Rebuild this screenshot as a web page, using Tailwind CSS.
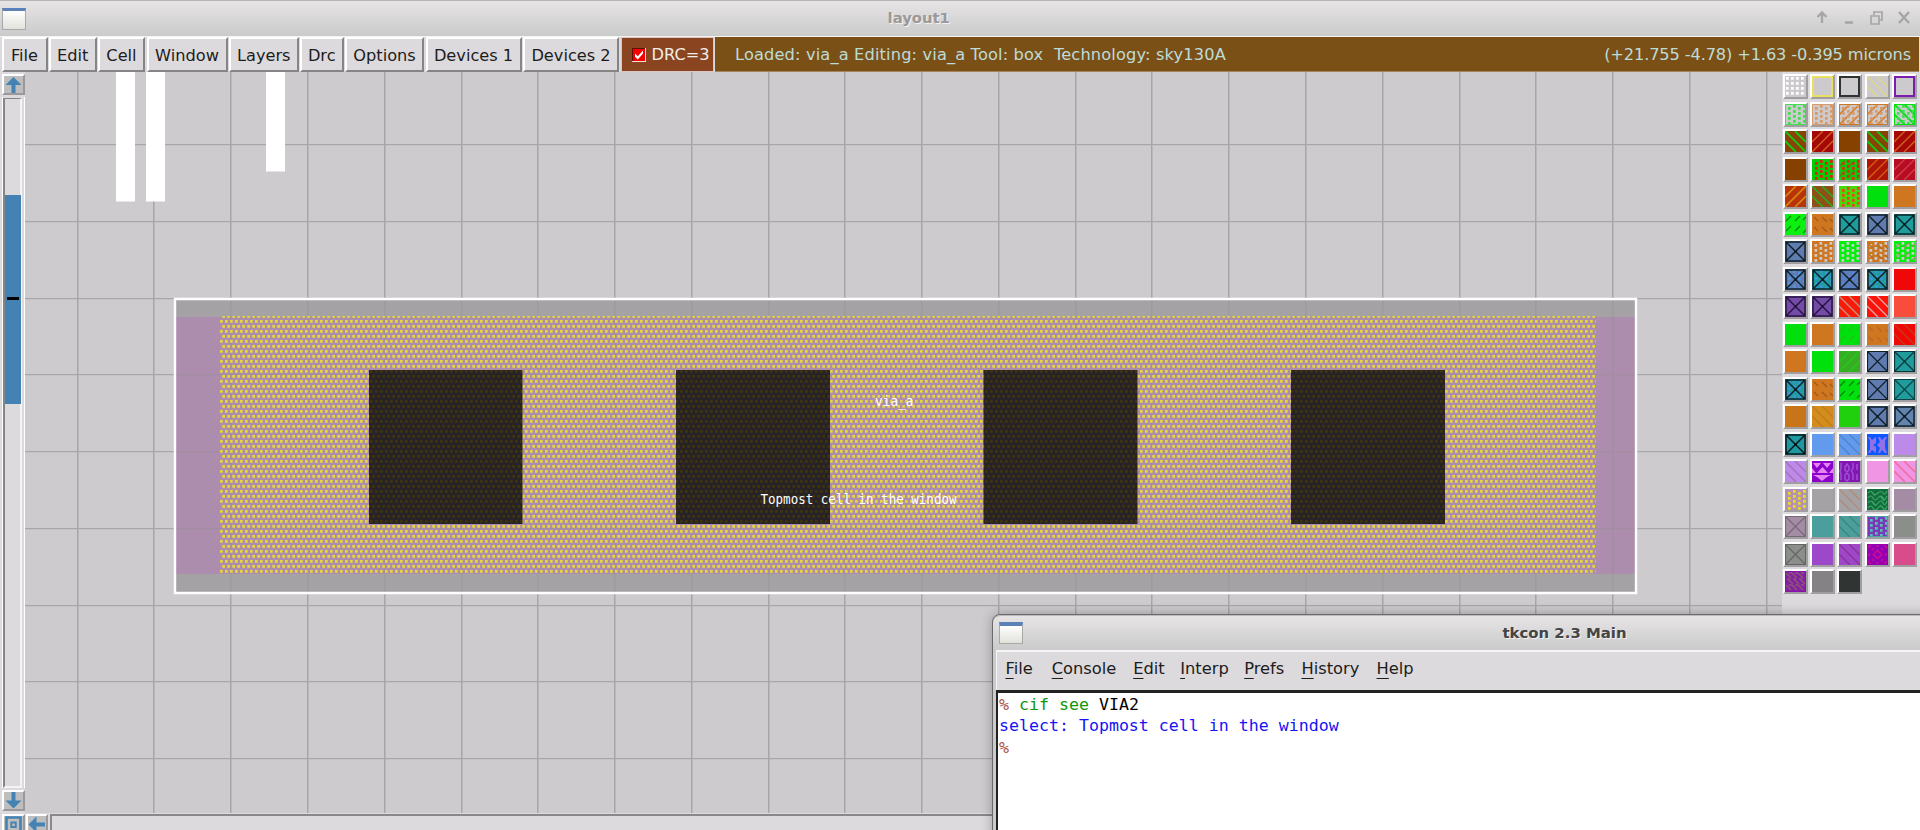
<!DOCTYPE html>
<html lang="en">
<head>
<meta charset="utf-8">
<title>layout1</title>
<script src="https://cdn.jsdelivr.net/npm/@tailwindcss/browser@4"></script>
</head>
<body class="w-[1920px] h-[830px] overflow-hidden relative flex flex-col bg-[#dddadd] font-['DejaVu_Sans',sans-serif] text-[16.2px] text-[#1c1c1c]">

<!-- Title bar -->
<header class="h-9 shrink-0 flex items-center border-t border-[#b5b5b5] bg-linear-to-b from-[#e8e4e6] via-[#d8d7d8] to-[#cbcbcb] px-0.5">
  <div class="w-6 h-[22px] border border-[#a9a9a9] border-t-[3px] border-t-[#5b82b8] bg-linear-to-b from-white to-[#e0e2da]"></div>
  <div class="flex-1 pr-[4px] text-center font-bold text-[14.8px] text-[#999] [text-shadow:1px_1px_0_#f2f2f2]">layout1</div>
  <svg class="w-[96px] h-[18px] mr-[6.5px] mb-[3px]" viewBox="0 0 96 18" fill="none" stroke="#a6a6a6" stroke-width="2">
    <path d="M6 15V5M1.500 9L6 4.500L10.500 9" stroke-width="2.400"/>
    <path d="M29 14.500h8" stroke-width="2.600"/>
    <path d="M55 8h8v8h-8zM58 7V4h8v8h-2" stroke-width="1.700"/>
    <path d="M83 4l10 11M93 4L83 15" stroke-width="2.400"/>
  </svg>
</header>

<!-- Menu and status bar -->
<nav class="h-9 shrink-0 flex items-stretch gap-[1.5px] pl-[1.5px] border-t border-[#f4f4f4] leading-[33px] whitespace-nowrap">
  <div class="w-[46px] border-2 border-t-white border-l-white border-r-[#858585] border-b-[#858585] text-center">File</div>
  <div class="w-[47.5px] border-2 border-t-white border-l-white border-r-[#858585] border-b-[#858585] text-center">Edit</div>
  <div class="w-[47px] border-2 border-t-white border-l-white border-r-[#858585] border-b-[#858585] text-center">Cell</div>
  <div class="w-[81px] border-2 border-t-white border-l-white border-r-[#858585] border-b-[#858585] text-center">Window</div>
  <div class="w-[69.5px] border-2 border-t-white border-l-white border-r-[#858585] border-b-[#858585] text-center">Layers</div>
  <div class="w-[43.5px] border-2 border-t-white border-l-white border-r-[#858585] border-b-[#858585] text-center">Drc</div>
  <div class="w-[79px] border-2 border-t-white border-l-white border-r-[#858585] border-b-[#858585] text-center">Options</div>
  <div class="w-[96px] border-2 border-t-white border-l-white border-r-[#858585] border-b-[#858585] text-center">Devices 1</div>
  <div class="w-[96px] border-2 border-t-white border-l-white border-r-[#858585] border-b-[#858585] text-center">Devices 2</div>
  <div class="w-[93px] border border-[#d9c8c0] bg-[#8a4420] text-[#f0eee8] flex items-center pl-[10px] gap-[6px]">
    <svg class="w-[14px] h-[14px] shrink-0" viewBox="0 0 14 14"><path d="M0 0h14v14H0z" fill="#f5dada"/><path d="M0 0h13v13H0z" fill="#5a1208"/><path d="M1 1h12v12H1z" fill="#f80000"/><path d="M3 5.500v3.200L5.800 11.500L11 5.500V2.500L5.800 8.300z" fill="#fff"/></svg>
    <span>DRC=3</span>
  </div>
  <div class="flex-1 mr-px flex justify-between bg-[#7b5017] text-[#bddcd8] border-b border-[#a3845c] pl-[20px] pr-[8px] leading-[35px]">
    <span class="whitespace-pre tracking-[0.16px]">Loaded: via_a Editing: via_a Tool: box  Technology: sky130A</span>
    <span class="tracking-[-0.12px]">(+21.755 -4.78) +1.63 -0.395 microns</span>
  </div>
</nav>

<main class="flex-1 min-h-0 flex">
  <!-- Vertical scroll bar -->
  <aside class="w-[25px] shrink-0 flex flex-col pl-0.5 pt-0.5">
    <div class="h-[21px] shrink-0 border-2 border-t-white border-l-white border-r-[#9a989a] border-b-[#9a989a] bg-[#bebebe]">
      <svg class="w-full h-full" viewBox="0 0 19 17"><path d="M9.500 1L17.500 9H11.500V17H7.500V9H1.500z" fill="#4482b4"/></svg>
    </div>
    <div class="h-[691px] shrink-0 my-0.5 border-x border-white flex">
      <div class="w-[19px] border-t border-l-2 border-r-2 border-b-2 border-t-[#858585] border-l-[#858585] border-r-[#f4f4f4] border-b-[#f4f4f4] bg-[#dddadd] pt-[96px] mt-px">
        <div class="h-[209px] w-[16px] bg-[#4482b4] pt-[102px]"><div class="h-[3px] w-[12px] ml-[2px] bg-black"></div></div>
      </div>
    </div>
    <div class="h-[21px] shrink-0 border-2 border-t-white border-l-white border-r-[#9a989a] border-b-[#9a989a] bg-[#bebebe]">
      <svg class="w-full h-full" viewBox="0 0 19 17"><path d="M9.500 16.500L17.500 8.500H11.500V0H7.500V8.500H1.500z" fill="#4482b4"/></svg>
    </div>
    <div class="h-[21px] shrink-0 mt-[3px] border-2 border-t-white border-l-white border-r-[#9a989a] border-b-[#9a989a] bg-[#bebebe]">
      <svg class="w-full h-full" viewBox="0 0 19 17" fill="none" stroke="#4482b4"><path d="M2.500 1.500h14v15h-14z" stroke-width="2.600"/><path d="M7.300 6.500h4.500v4.500H7.300z" stroke-width="1.800"/></svg>
    </div>
  </aside>

  <div class="flex-1 min-w-0 flex flex-col">
    <!-- Layout canvas -->
    <svg class="w-[1757px] h-[741px] shrink-0 block" viewBox="25 72 1757 741">
      <defs>
        <pattern id="dots" patternUnits="userSpaceOnUse" x="220" y="314" width="5" height="10">
          <path d="M2.300 1h2.700v2.700H2.300zM0 6h2.700v2.700H0z" fill="#e6d636"/>
        </pattern>
        <pattern id="dark" patternUnits="userSpaceOnUse" x="220" y="314" width="5" height="10">
          <path d="M0 0h5v10H0z" fill="#272227"/><path d="M2.300 1h2.700v2.700H2.300zM0 6h2.700v2.700H0z" fill="#3c340e"/>
        </pattern>
      </defs>
      <rect x="25" y="72" width="1757" height="741" fill="#cdcbce"/>
      <g id="grid" fill="#a8a6a9"></g>
      <path d="M116 72h19v129.500h-19zM146 72h19v129.500h-19zM266 72h19v99.500h-19z" fill="#fff"/>
      <path d="M175 299h1461v294H175z" fill="#a4a2a4"/>
      <path d="M176 317h1459v257H176z" fill="#ad8dad"/>
      <g id="grid2" fill="#8f8f8f" opacity=".3"></g>
      <path d="M220 316h1375.500v257H220z" fill="url(#dots)"/>
      <path d="M369 370h153.500v154H369zM676 370h154v154H676zM983.500 370h154v154h-154zM1291 370h154v154h-154z" fill="url(#dark)"/>
      <path d="M175 299h1461v294H175z" fill="none" stroke="#fff" stroke-width="2.400"/>
      <g fill="#fff" font-family="DejaVu Sans Mono, monospace" font-size="13.300">
        <text x="875" y="405.500" textLength="38.500" lengthAdjust="spacingAndGlyphs">via_a</text>
        <text x="760.500" y="504" textLength="196" lengthAdjust="spacingAndGlyphs">Topmost cell in the window</text>
      </g>
    </svg>
    <!-- Horizontal scroll bar -->
    <div class="flex-1 flex pt-px pl-px">
      <div class="w-[22px] h-[21px] border-2 border-t-white border-l-white border-r-[#9a989a] border-b-[#9a989a] bg-[#bebebe]">
        <svg class="w-full h-full" viewBox="0 0 18 17"><path d="M0.500 8.500L8.500 0.500V6.500H17V10.500H8.500V16.500z" fill="#4482b4"/></svg>
      </div>
      <div class="flex-1 ml-0.5 border-t-2 border-l-2 border-[#8a888a] bg-[#dddadd]"></div>
    </div>
  </div>

  <!-- Layer palette -->
  <section id="palette" class="w-[138px] shrink-0 pl-[0.5px] pt-[2px] grid grid-cols-[repeat(5,27.4px)] auto-rows-[27.5px] content-start"></section>
</main>

<!-- Console window -->
<div class="absolute left-[992px] top-[614px] w-[940px] h-[230px] rounded-tl-lg border border-[#6a6a6a] bg-[#cbcbcb] shadow-[0_0_12px_rgba(0,0,0,0.28)] flex flex-col overflow-hidden">
  <div class="h-[35px] shrink-0 flex items-center rounded-tl-lg border-t border-[#bbb] bg-linear-to-b from-[#e8e4e6] via-[#d8d7d8] to-[#cbcbcb] pl-1.5">
    <div class="w-6 h-[22px] border border-[#a9a9a9] border-t-[4px] border-t-[#5b82b8] bg-linear-to-b from-white to-[#e0e2da]"></div>
    <div class="ml-[479.5px] pt-px font-bold text-[14.9px] text-[#444] [text-shadow:1px_1px_0_#f2f2f2]">tkcon 2.3 Main</div>
  </div>
  <div class="h-[40px] ml-[3px] shrink-0 flex items-center border-t-2 border-l border-[#f6f6f6] bg-[#dddadd] pl-[8.5px] pb-1 text-[16.3px] underline-offset-4">
    <span class="w-[46.2px]"><u>F</u>ile</span><span class="w-[81.5px]"><u>C</u>onsole</span><span class="w-[47px]"><u>E</u>dit</span><span class="w-[64px]"><u>I</u>nterp</span><span class="w-[57.2px]"><u>P</u>refs</span><span class="w-[75.2px]"><u>H</u>istory</span><span><u>H</u>elp</span>
  </div>
  <div class="flex-1 ml-[3px] border-t-[3px] border-l-2 border-[#222] bg-white pl-px pt-px font-['DejaVu_Sans_Mono',monospace] text-[16.6px] leading-[21.3px] whitespace-pre"><div><span class="text-[#b05545]">%</span> <span class="text-[#0c980c]">cif see</span> <span class="text-black">VIA2</span></div><div class="text-[#1414f5]">select: Topmost cell in the window</div><div class="text-[#b05545]">%</div></div>
</div>

<script>
// Background grid, one line per 76.77 px
const lines = (x0, y0, x1, y1) => {
  let s = '';
  for (let k = 0; k < 23; k++) {
    const x = 77.2 + k * 76.77;
    if (x > x0 && x < x1) s += `<rect x="${Math.floor(x)}" y="${y0}" width="1.500" height="${y1 - y0}"/>`;
  }
  for (let k = 0; k < 9; k++) {
    const y = 144.3 + k * 76.7;
    if (y > y0 && y < y1) s += `<rect x="${x0}" y="${Math.round(y)}" width="${x1 - x0}" height="1.200"/>`;
  }
  return s;
};
document.getElementById('grid').innerHTML = lines(25, 72, 1782, 813);
document.getElementById('grid2').innerHTML = lines(176, 300, 1635, 592);

// Stipple styles used by the layer swatches (21 x 21 units)
const P = (d, c, w = 1.4) => `<path d="${d}" stroke="${c}" stroke-width="${w}" fill="none"/>`;
const spots = (c, cols, stag) => {
  let d = '';
  cols.forEach((x, i) => {
    for (let j = 0; j < 5; j++) {
      const y = 1 + j * 5 + (stag && i % 2 === 0 ? 2 : 0);
      if (y < 19) d += `M${x} ${y}h2.700v2.700h-2.700z`;
    }
  });
  return `<path d="${d}" fill="${c}"/>`;
};
const S = {
  edge: c => P('M1 1h19v19H1z', c, 2),
  grid: c => spots(c, [1, 6, 11, 16], false),
  dot: c => spots(c, [3, 8, 13, 18], true),
  back: (c, w) => P('M0 10L11 21M0 0L21 21M10 0L21 11', c, w),
  fwd: (c, w) => P('M0 11L11 0M0 21L21 0M10 21L21 10', c, w),
  dash: c => P('M1 7l5-5M10 7l5-5M1 17l5-5M10 17l5-5M18 19l3-3M18 6l3-3', c, 1.1),
  dashb: c => P('M2 3l4 4M10 3l5 5M18 5l3 3M2 13l4 4M10 13l5 5M18 14l3 3', c, 1.1),
  x: c => P('M1 1h19v19H1zM1 1l19 19M20 1L1 20', c, 1.5) + `<circle cx="10.500" cy="10.500" r="1.400" fill="${c}"/>`,
  thin: c => P('M1 1l19 19M20 1L1 20', c, 1.2) + P('M.5.5h20v20H.5z', c, 1.2),
  mesh: c => spots(c, [2.500, 7.500, 12.500, 17.500], true),
  bow: c => `<path d="M1 3h2l2 3 4-3v6l-3 2 3 2v6l-4-3-2 3H1l2-4v-8zM11 3h2l2 3 3-3h2l-2 4v7l2 5h-2l-3-3-2 3h-2l2-5-3-3 3-3z" fill="${c}"/>`,
  tri: c => `<path d="M1 2h8L5 7zM11 2h8l-4 5zM5 12l5.500-6 5.500 6zM0 12V7l4 5zM21 12V7l-4 5zM1 14h18l-4 2-5 4-5-4z" fill="${c}"/>`,
  oval: c => P('M2 2v5l-1 3 1 3v6M6 6l2-3 2 3v3l-2 2-2-2zM6 14l2-2 2 2v4l-2 2-2-2zM14 2v5l-1.500 3 1.500 3v6M18 3v6M18 13v6', c, 1.5),
  wave: c => P('M1 4q3-3 5 0t5 0 5 0 4-2M1 9q3-4 5 0t5 0 5 0 4-2M1 14q3-4 5 0t5 0 5 0 4-2M1 19q3-4 5 0t5 0 5 0 4-2M4 2l4 5M13 7l4 5M5 12l4 5M13 16l4 4', c, 1.2),
  weave: c => P('M1 2l5 5M7 2l5 5M13 2l5 5M3 8l5 5M9 8l5 5M15 8l5 5M1 14l5 5M7 14l5 5M13 14l5 5M4 2h3M10 2h3M16 2h3M2 8h3M8 8h3M14 8h3M4 14h3M10 14h3M16 14h3', c, 1.5),
  rings: c => P('M10.500 6.500l4 4-4 4L6.500 10.500zM1 4l3-3M17 1l3 3M1 17l3 3M17 20l3-3M2 9v3M19 9v3M9 2h3M9 19h3M5 6l2-2M14 4l2 2M5 15l2 2M14 17l2-2', c, 1.7),
  frame: c => P('M.5.5h20v20H.5z', c, 1)
};
const G = '#00e00c', O = '#cf7620', B = '#5f7bb0', T = '#209c9c', K = '#102028', BG = '#cccacc';
const L = [
  [BG,'grid','#fff'], [BG,'edge','#e8e060'], [BG,'edge','#2e3230'], [BG,'back','#e2dc70','1.2'], [BG,'edge','#7c1cac'],
  [BG,'dot','#3ee04e','frame','#3ee04e'], [BG,'dot','#d99a68','frame','#d99a68'], [BG,'fwd','#d48030','1.7','dot','#d99a68','frame',O], [BG,'fwd','#d48030','1.7','dot','#d99a68','frame',O], [BG,'back','#10dc20','2','dot','#3ee04e','frame',G],
  ['#8a4208','back','#10cc10','1.8'], ['#a60808','fwd','#cc6420'], ['#864000'], ['#8a4208','back','#10cc10','1.8'], ['#a60808','fwd','#cc6420'],
  ['#864000'], ['#04cc04','dot','#e81c14'], ['#10c808','dot','#e02814','dash','#707010'], ['#ae1408','fwd','#d06010'], ['#b80c24','fwd','#d04040'],
  ['#b83408','fwd','#d88810','1.6'], ['#8c5018','back','#20b818'], ['#48d808','dot','#e84820'], [G], [O],
  ['#0cf010','dash','#0a7c10'], [O,'dashb','#a05818'], [T,'x','#082428'], [B,'x',K], [T,'x','#082428'],
  [B,'x',K], [O,'mesh',BG], ['#04f00c','mesh',BG], [O,'mesh',BG,'dashb','#b06818'], ['#04f00c','mesh',BG,'dash','#a09060'],
  [B,'dot','#5494e0','x',K], [T,'dot','#3c94e0','x',K], [B,'dot','#5484e0','x',K], [T,'dot','#3c94e0','x',K], ['#f00808'],
  ['#744ca8','x','#281440'], ['#744ca8','x','#281440'], ['#f81c08','back','#c88c80'], ['#fc1408','back','#e8a0a8'], ['#f84c3c'],
  [G,'fwd','#14d014','.4'], [O], [G,'dash','#30b820'], [O,'dashb','#b86820'], ['#f00808','back','#c43c10'],
  [O], [G], ['#38ac24','fwd','#20cc14'], [B,'thin',K], [T,'thin','#0c3438'],
  [T,'dot','#3c94e0','x',K], [O,'dashb','#a05818'], [G,'dash','#0a7c10'], [B,'thin',K], [T,'thin','#0c4448'],
  ['#c87418'], ['#d48c1c','back','#c07c20'], ['#20d00c'], [B,'x',K], ['#6484b0','x',K],
  ['#2098a0','x','#04181c'], ['#629bee'], ['#629bee','back','#5084c8'], ['#0c58ff','bow','#9470e8'], ['#bc8ae8'],
  ['#bc8ae8','back','#a870b8'], ['#8c00cc','tri','#e484f4'], ['#8416b4','oval','#9c50d0'], ['#f094e4'], ['#f094e4','back','#f46898'],
  ['#b490b4','dot','#e8dc20'], ['#a4a2a4'], ['#a4a2a4','back','#b08c78'], ['#146c3c','wave','#38a868'], ['#a48ca4'],
  ['#a48ca4','thin','#786878'], ['#4a9e9c'], ['#4a9e9c','back','#3c887c'], ['#7c38b8','dot','#54c0b4','frame','#44a4a4'], ['#8c8e8c'],
  ['#8c8e8c','thin','#646664'], ['#9c48c8'], ['#9c48c8','back','#903098'], ['#9400b4','rings','#c80c98'], ['#d84c8c'],
  ['#8420a4','weave','#8c5870','frame','#8c10ac'], ['#848284'], ['#303432']
];
document.getElementById('palette').innerHTML = L.map(([bg, ...st]) => {
  let s = '';
  for (let i = 0; i < st.length;) {
    const w = /^[.\d]+$/.test(st[i + 2] || '') ? +st[i + 2] : undefined;
    s += S[st[i]](st[i + 1], w);
    i += w === undefined ? 2 : 3;
  }
  return `<div class="w-[25px] h-[25px] border-2 border-t-white border-l-white border-r-[#a09ea0] border-b-[#a09ea0] bg-[#e4e2e4]"><svg class="w-[21px] h-[21px] block" viewBox="0 0 21 21"><rect width="21" height="21" fill="${bg}"/>${s}</svg></div>`;
}).join('');
</script>
</body>
</html>
